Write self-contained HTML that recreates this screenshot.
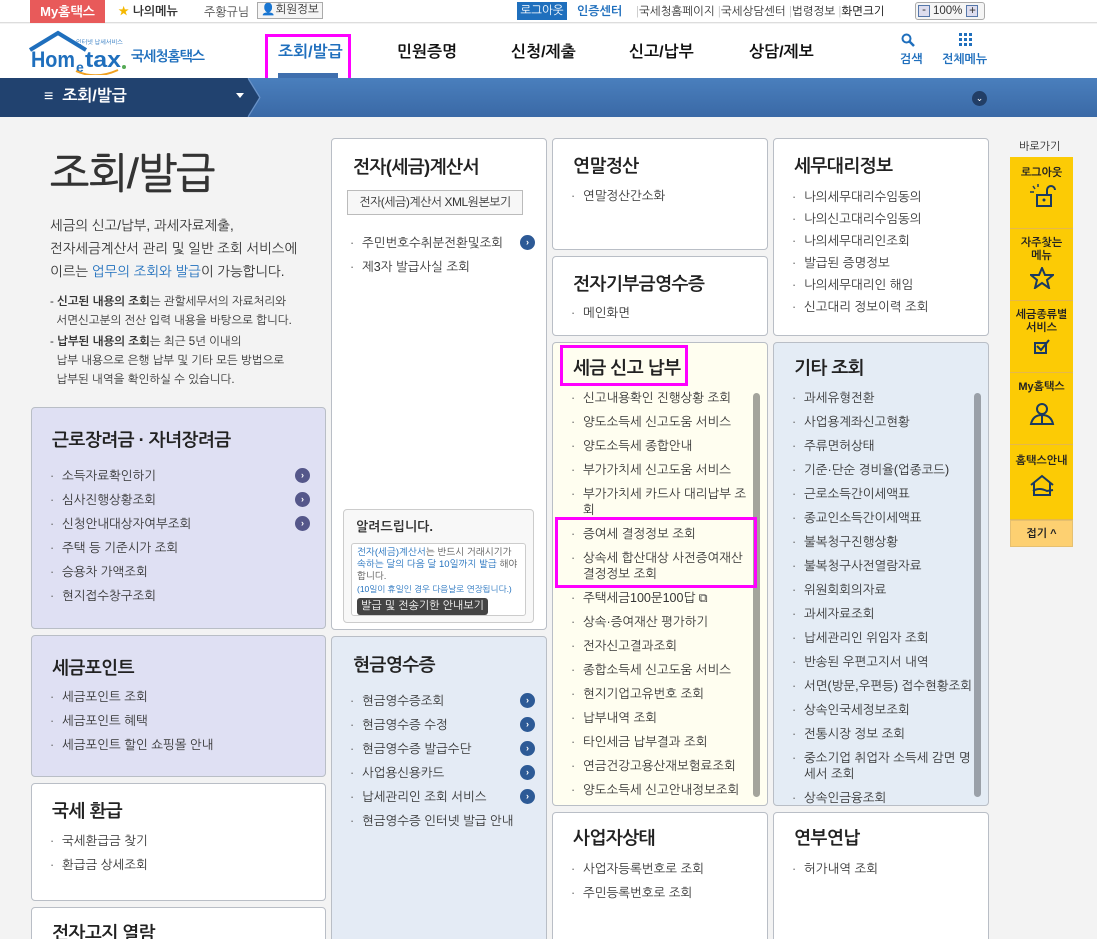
<!DOCTYPE html>
<html><head><meta charset="utf-8">
<style>
*{margin:0;padding:0;box-sizing:border-box}
html,body{width:1097px;height:939px;overflow:hidden}
body{font-family:"Liberation Sans","NanumGothic","Noto Sans CJK KR",sans-serif;font-size:12px;color:#333;background:#f3f3f3;position:relative}
.a{position:absolute}
#top{left:0;top:0;width:1097px;height:23px;background:#fff;border-bottom:1px solid #ddd}
#hdr{left:0;top:24px;width:1097px;height:54px;background:#fff}
#nav{left:0;top:78px;width:1097px;height:39px;background:linear-gradient(#4a7fbd,#3a69a6)}
.panel{position:absolute;border:1px solid #b9bec6;border-radius:4px;background:#fff;overflow:hidden}
.panel h3{font-size:18px;font-weight:bold;color:#222;letter-spacing:-0.5px;position:absolute}
ul{list-style:none;position:absolute}
li{font-size:12.5px;line-height:16px;margin-bottom:8px;position:relative;padding-left:12px;color:#333}
li:before{content:"·";position:absolute;left:0;top:0;color:#666}
.go{position:absolute;right:0;top:0;width:15px;height:15px;border-radius:50%;background:#2d5a96;color:#fff;font-size:9px;line-height:15px;text-align:center;font-weight:bold}
.gp{background:#55578a}
.sb{position:absolute;width:7px;border-radius:4px;background:#a4a49c}
.side{position:absolute;left:1010px;width:63px;background:#fccb05;border-bottom:1px solid #e6b84a;text-align:center;font-size:11px;font-weight:bold;color:#222}
.side svg{display:block;margin:4px auto 0}
.mag{outline:3px solid #ff00ff;outline-offset:0}
</style></head><body>

<div class="a" id="top"></div>
<div class="a" style="left:30px;top:0;width:75px;height:23px;background:#e85a5a;color:#fff;font-weight:bold;font-size:13px;line-height:23px;text-align:center">My홈택스</div>
<div class="a" style="left:118px;top:4px;font-size:12px;font-weight:bold;color:#333"><span style="color:#f5b800">★</span> 나의메뉴</div>
<div class="a" style="left:204px;top:5px;font-size:12px;color:#444">주황규님</div>
<div class="a" style="left:257px;top:2px;width:66px;height:17px;border:1px solid #aaa;background:#f5f5f5;font-size:11.5px;line-height:15px;text-align:center;color:#333">👤회원정보</div>
<div class="a" style="left:517px;top:2px;width:50px;height:18px;background:#1f6fbd;color:#fff;font-size:11.5px;line-height:18px;text-align:center">로그아웃</div>
<div class="a" style="left:577px;top:4px;font-size:12px;font-weight:bold;color:#1f6fbd">인증센터</div>
<div class="a" style="left:636px;top:4px;font-size:11.5px;color:#333;white-space:nowrap"><span style="color:#ccc">|</span>국세청홈페이지 <span style="color:#ccc">|</span>국세상담센터 <span style="color:#ccc">|</span>법령정보 <span style="color:#ccc">|</span><b style="font-weight:normal;color:#000">화면크기</b></div>
<div class="a" style="left:915px;top:2px;width:70px;height:18px;border:1px solid #aaa;border-radius:3px;background:#f5f5f5;font-size:11.5px;line-height:16px;color:#333"><span style="display:inline-block;width:12px;height:12px;border:1px solid #57a;background:#dde;margin:2px 3px 0 2px;vertical-align:top;line-height:9px;text-align:center">-</span>100%<span style="display:inline-block;width:12px;height:12px;border:1px solid #57a;background:#dde;margin:2px 0 0 4px;vertical-align:top;line-height:10px;text-align:center">+</span></div>

<div class="a" id="hdr"></div>
<svg class="a" style="left:28px;top:30px" width="100" height="45" viewBox="0 0 100 45"><path d="M2 20 L30 3 L58 20" fill="none" stroke="#1f6fbd" stroke-width="4"/><text x="3" y="37" font-family="Liberation Sans" font-weight="bold" font-size="22" fill="#1f6fbd" textLength="44" lengthAdjust="spacingAndGlyphs">Hom</text><text x="48" y="42" font-family="Liberation Sans" font-weight="bold" font-size="14" fill="#1f6fbd">e</text><text x="57" y="37" font-family="Liberation Sans" font-weight="bold" font-size="22" fill="#1f6fbd" textLength="36" lengthAdjust="spacingAndGlyphs">tax</text><circle cx="96" cy="37" r="2" fill="#5a5"/><path d="M48 41 Q68 50 90 40" stroke="#f0a020" stroke-width="2" fill="none"/></svg>
<div class="a" style="left:76px;top:38px;font-size:6px;color:#1f6fbd">인터넷 납세서비스</div>
<div class="a" style="left:131px;top:48px;font-size:14px;font-weight:bold;color:#1f6fbd;letter-spacing:-1px">국세청홈택스</div>
<div class="a mag" style="left:268px;top:37px;width:80px;height:42px"></div>
<div class="a" style="left:278px;top:44px;font-size:16px;font-weight:bold;color:#1f6fbd">조회/발급</div>
<div class="a" style="left:278px;top:73px;width:60px;height:5px;background:#3f6fae"></div>
<div class="a" style="left:397px;top:44px;font-size:16px;font-weight:bold;color:#111">민원증명</div>
<div class="a" style="left:511px;top:44px;font-size:16px;font-weight:bold;color:#111">신청/제출</div>
<div class="a" style="left:629px;top:44px;font-size:16px;font-weight:bold;color:#111">신고/납부</div>
<div class="a" style="left:749px;top:44px;font-size:16px;font-weight:bold;color:#111">상담/제보</div>
<svg class="a" style="left:901px;top:33px" width="14" height="14"><circle cx="5.5" cy="5.5" r="4" fill="none" stroke="#1f6fbd" stroke-width="2"/><path d="M8.5 8.5 L13 13" stroke="#1f6fbd" stroke-width="2.5"/></svg>
<div class="a" style="left:900px;top:52px;font-size:12px;font-weight:bold;color:#1f6fbd">검색</div>
<svg class="a" style="left:959px;top:33px" width="14" height="14" fill="#1f6fbd"><rect x="0" y="0" width="3" height="3"/><rect x="5" y="0" width="3" height="3"/><rect x="10" y="0" width="3" height="3"/><rect x="0" y="5" width="3" height="3"/><rect x="5" y="5" width="3" height="3"/><rect x="10" y="5" width="3" height="3"/><rect x="0" y="10" width="3" height="3"/><rect x="5" y="10" width="3" height="3"/><rect x="10" y="10" width="3" height="3"/></svg>
<div class="a" style="left:942px;top:52px;font-size:12px;font-weight:bold;color:#1f6fbd">전체메뉴</div>

<div class="a" id="nav"></div>
<div class="a" style="left:0;top:78px;width:248px;height:39px;background:#21426f"></div>
<svg class="a" style="left:247px;top:78px" width="14" height="39"><path d="M0 0 L12 19.5 L0 39 Z" fill="#21426f"/><path d="M1 0 L13 19.5 L1 39" fill="none" stroke="#6f95c8" stroke-width="1"/></svg>
<div class="a" style="left:44px;top:88px;font-size:16px;font-weight:bold;color:#fff">≡&nbsp; 조회/발급</div>
<div class="a" style="left:236px;top:93px;border:4px solid transparent;border-top:5px solid #fff"></div>
<div class="a" style="left:972px;top:91px;width:15px;height:15px;border-radius:50%;background:#223e66;color:#fff;font-size:9px;line-height:15px;text-align:center">⌄</div>

<!-- intro -->
<div class="a" style="left:50px;top:148px;font-size:42px;color:#333;letter-spacing:-1px;-webkit-text-stroke:0.6px #333">조회/발급</div>
<div class="a" style="left:50px;top:214px;font-size:13.5px;line-height:23px;color:#333;width:270px">세금의 신고/납부, 과세자료제출,<br>전자세금계산서 관리 및 일반 조회 서비스에<br>이르는 <span style="color:#1f6fbd">업무의 조회와 발급</span>이 가능합니다.</div>
<div class="a" style="left:50px;top:293px;font-size:11.5px;line-height:19px;color:#333;width:270px">- <b>신고된 내용의 조회</b>는 관할세무서의 자료처리와<br>&nbsp;&nbsp;서면신고분의 전산 입력 내용을 바탕으로 합니다.</div>
<div class="a" style="left:50px;top:333px;font-size:11.5px;line-height:19px;color:#333;width:270px">- <b>납부된 내용의 조회</b>는 최근 5년 이내의<br>&nbsp;&nbsp;납부 내용으로 은행 납부 및 기타 모든 방법으로<br>&nbsp;&nbsp;납부된 내역을 확인하실 수 있습니다.</div>

<!-- col1 -->
<div class="panel" style="left:31px;top:407px;width:295px;height:222px;background:#dfe0f3"><h3 style="left:20px;top:22px">근로장려금 · 자녀장려금</h3>
<ul style="left:18px;top:60px;width:260px"><li>소득자료확인하기<span class="go gp">›</span></li><li>심사진행상황조회<span class="go gp">›</span></li><li>신청안내대상자여부조회<span class="go gp">›</span></li><li>주택 등 기준시가 조회</li><li>승용차 가액조회</li><li>현지접수창구조회</li></ul></div>
<div class="panel" style="left:31px;top:635px;width:295px;height:142px;background:#dfe0f3"><h3 style="left:20px;top:22px">세금포인트</h3>
<ul style="left:18px;top:53px;width:260px"><li>세금포인트 조회</li><li>세금포인트 혜택</li><li>세금포인트 할인 쇼핑몰 안내</li></ul></div>
<div class="panel" style="left:31px;top:783px;width:295px;height:118px"><h3 style="left:20px;top:17px">국세 환급</h3>
<ul style="left:18px;top:49px;width:260px"><li>국세환급금 찾기</li><li>환급금 상세조회</li></ul></div>
<div class="panel" style="left:31px;top:907px;width:295px;height:60px"><h3 style="left:20px;top:15px">전자고지 열람</h3></div>

<!-- col2 -->
<div class="panel" style="left:331px;top:138px;width:216px;height:492px"><h3 style="left:21px;top:18px">전자(세금)계산서</h3>
<div class="a" style="left:15px;top:51px;width:176px;height:25px;border:1px solid #bbb;background:#f7f7f7;font-size:12px;line-height:23px;text-align:center;letter-spacing:-0.5px">전자(세금)계산서 XML원본보기</div>
<ul style="left:18px;top:96px;width:185px"><li>주민번호수취분전환및조회<span class="go">›</span></li><li>제3자 발급사실 조회</li></ul>
<div class="a" style="left:11px;top:370px;width:191px;height:114px;border:1px solid #ccc;border-radius:4px;background:#f8f8f8">
<div class="a" style="left:12px;top:9px;font-size:13px;font-weight:bold;color:#333">알려드립니다.</div>
<div class="a" style="left:7px;top:33px;width:175px;height:73px;border:1px solid #ccc;border-radius:3px;background:#fff;padding:3px 5px;font-size:9.5px;line-height:12px;color:#555"><span style="color:#1f6fbd">전자(세금)계산서</span>는 반드시 거래시기가 <span style="color:#1f6fbd">속하는 달의 다음 달 10일까지 발급</span> 해야 합니다.<br><span style="color:#1f6fbd;font-size:8.5px">(10일이 휴일인 경우 다음날로 연장됩니다.)</span><div style="margin-top:2px;width:131px;height:17px;background:#444;border-radius:3px;color:#fff;font-size:11px;line-height:17px;text-align:center">발급 및 전송기한 안내보기</div></div></div></div>
<div class="panel" style="left:331px;top:636px;width:216px;height:320px;background:#e4ebf5"><h3 style="left:21px;top:18px">현금영수증</h3>
<ul style="left:18px;top:56px;width:185px"><li>현금영수증조회<span class="go">›</span></li><li>현금영수증 수정<span class="go">›</span></li><li>현금영수증 발급수단<span class="go">›</span></li><li>사업용신용카드<span class="go">›</span></li><li>납세관리인 조회 서비스<span class="go">›</span></li><li style="margin-top:6px">현금영수증 인터넷 발급 안내</li></ul></div>

<!-- col3 -->
<div class="panel" style="left:552px;top:138px;width:216px;height:112px"><h3 style="left:20px;top:17px">연말정산</h3>
<ul style="left:18px;top:49px"><li>연말정산간소화</li></ul></div>
<div class="panel" style="left:552px;top:256px;width:216px;height:80px"><h3 style="left:20px;top:17px">전자기부금영수증</h3>
<ul style="left:18px;top:48px"><li>메인화면</li></ul></div>
<div class="panel" style="left:552px;top:342px;width:216px;height:464px;background:#fffef0"><h3 style="left:20px;top:15px">세금 신고 납부</h3>
<ul style="left:18px;top:47px;width:180px"><li>신고내용확인 진행상황 조회</li><li>양도소득세 신고도움 서비스</li><li>양도소득세 종합안내</li><li>부가가치세 신고도움 서비스</li><li>부가가치세 카드사 대리납부 조회</li><li>증여세 결정정보 조회</li><li>상속세 합산대상 사전증여재산 결정정보 조회</li><li>주택세금100문100답 ⧉</li><li>상속·증여재산 평가하기</li><li>전자신고결과조회</li><li>종합소득세 신고도움 서비스</li><li>현지기업고유번호 조회</li><li>납부내역 조회</li><li>타인세금 납부결과 조회</li><li>연금건강고용산재보험료조회</li><li>양도소득세 신고안내정보조회</li></ul>
<div class="sb" style="left:200px;top:50px;height:404px;background:#a4a49c"></div></div>
<div class="a mag" style="left:563px;top:348px;width:122px;height:35px"></div>
<div class="a mag" style="left:558px;top:520px;width:196px;height:65px"></div>
<div class="panel" style="left:552px;top:812px;width:216px;height:140px"><h3 style="left:20px;top:15px">사업자상태</h3>
<ul style="left:18px;top:48px"><li>사업자등록번호로 조회</li><li>주민등록번호로 조회</li></ul></div>

<!-- col4 -->
<div class="panel" style="left:773px;top:138px;width:216px;height:198px"><h3 style="left:20px;top:17px">세무대리정보</h3>
<ul style="left:18px;top:50px;width:190px"><li style="margin-bottom:6px">나의세무대리수임동의</li><li style="margin-bottom:6px">나의신고대리수임동의</li><li style="margin-bottom:6px">나의세무대리인조회</li><li style="margin-bottom:6px">발급된 증명정보</li><li style="margin-bottom:6px">나의세무대리인 해임</li><li>신고대리 정보이력 조회</li></ul></div>
<div class="panel" style="left:773px;top:342px;width:216px;height:464px;background:#e4ecf5"><h3 style="left:20px;top:15px">기타 조회</h3>
<ul style="left:18px;top:47px;width:186px"><li>과세유형전환</li><li>사업용계좌신고현황</li><li>주류면허상태</li><li>기준·단순 경비율(업종코드)</li><li>근로소득간이세액표</li><li>종교인소득간이세액표</li><li>불복청구진행상황</li><li>불복청구사전열람자료</li><li>위원회회의자료</li><li>과세자료조회</li><li>납세관리인 위임자 조회</li><li>반송된 우편고지서 내역</li><li>서면(방문,우편등) 접수현황조회</li><li>상속인국세정보조회</li><li>전통시장 정보 조회</li><li>중소기업 취업자 소득세 감면 명세서 조회</li><li>상속인금융조회</li></ul>
<div class="sb" style="left:200px;top:50px;height:404px;background:#9aa0a8"></div></div>
<div class="panel" style="left:773px;top:812px;width:216px;height:140px"><h3 style="left:20px;top:15px">연부연납</h3>
<ul style="left:18px;top:48px"><li>허가내역 조회</li></ul></div>

<!-- sidebar -->
<div class="a" style="left:1019px;top:140px;font-size:11px;color:#222">바로가기</div>
<div class="side" style="top:157px;height:72px;padding-top:10px">로그아웃<svg width="28" height="26" viewBox="0 0 28 26"><rect x="9" y="12" width="14" height="11" fill="none" stroke="#1a3a60" stroke-width="2"/><path d="M19 12 V7 a4 4 0 0 1 8 0" fill="none" stroke="#1a3a60" stroke-width="2"/><circle cx="16" cy="17" r="1.5" fill="#1a3a60"/><path d="M2 9 h4 M5 3 l2 3 M10 1 v3" stroke="#1a3a60" stroke-width="1.5"/></svg></div>
<div class="side" style="top:229px;height:72px;padding-top:8px;line-height:13px">자주찾는<br>메뉴<svg width="24" height="22" viewBox="0 0 24 22"><path d="M12 1 L15 8 L23 8 L17 13 L19 21 L12 16 L5 21 L7 13 L1 8 L9 8 Z" fill="none" stroke="#1a3a60" stroke-width="2"/></svg></div>
<div class="side" style="top:301px;height:72px;padding-top:8px;line-height:13px">세금종류별<br>서비스<svg width="18" height="16" viewBox="0 0 18 16"><rect x="2" y="4" width="11" height="10" fill="none" stroke="#1a3a60" stroke-width="2"/><path d="M4 7 L8 11 L16 1" fill="none" stroke="#1a3a60" stroke-width="2"/></svg></div>
<div class="side" style="top:373px;height:72px;padding-top:8px">My홈택스<svg width="26" height="26" viewBox="0 0 26 26" style="margin-top:8px"><circle cx="13" cy="8" r="5" fill="none" stroke="#1a3a60" stroke-width="2"/><path d="M2 23 Q4 14 13 14 Q22 14 24 23 Z M13 14 V23" fill="none" stroke="#1a3a60" stroke-width="2"/></svg></div>
<div class="side" style="top:445px;height:75px;padding-top:10px">홈택스안내<svg width="30" height="26" viewBox="0 0 30 26" style="margin-top:6px"><path d="M4 12 L15 3 L26 12 M7 10 V22 H23 V10" fill="none" stroke="#1a3a60" stroke-width="2"/><path d="M6 18 Q12 14 20 18 L26 17" fill="none" stroke="#1a3a60" stroke-width="2"/></svg></div>
<div class="side" style="top:520px;height:27px;background:#fdd071;line-height:26px;border:1px solid #e6c070">접기 ^</div>
</body></html>
